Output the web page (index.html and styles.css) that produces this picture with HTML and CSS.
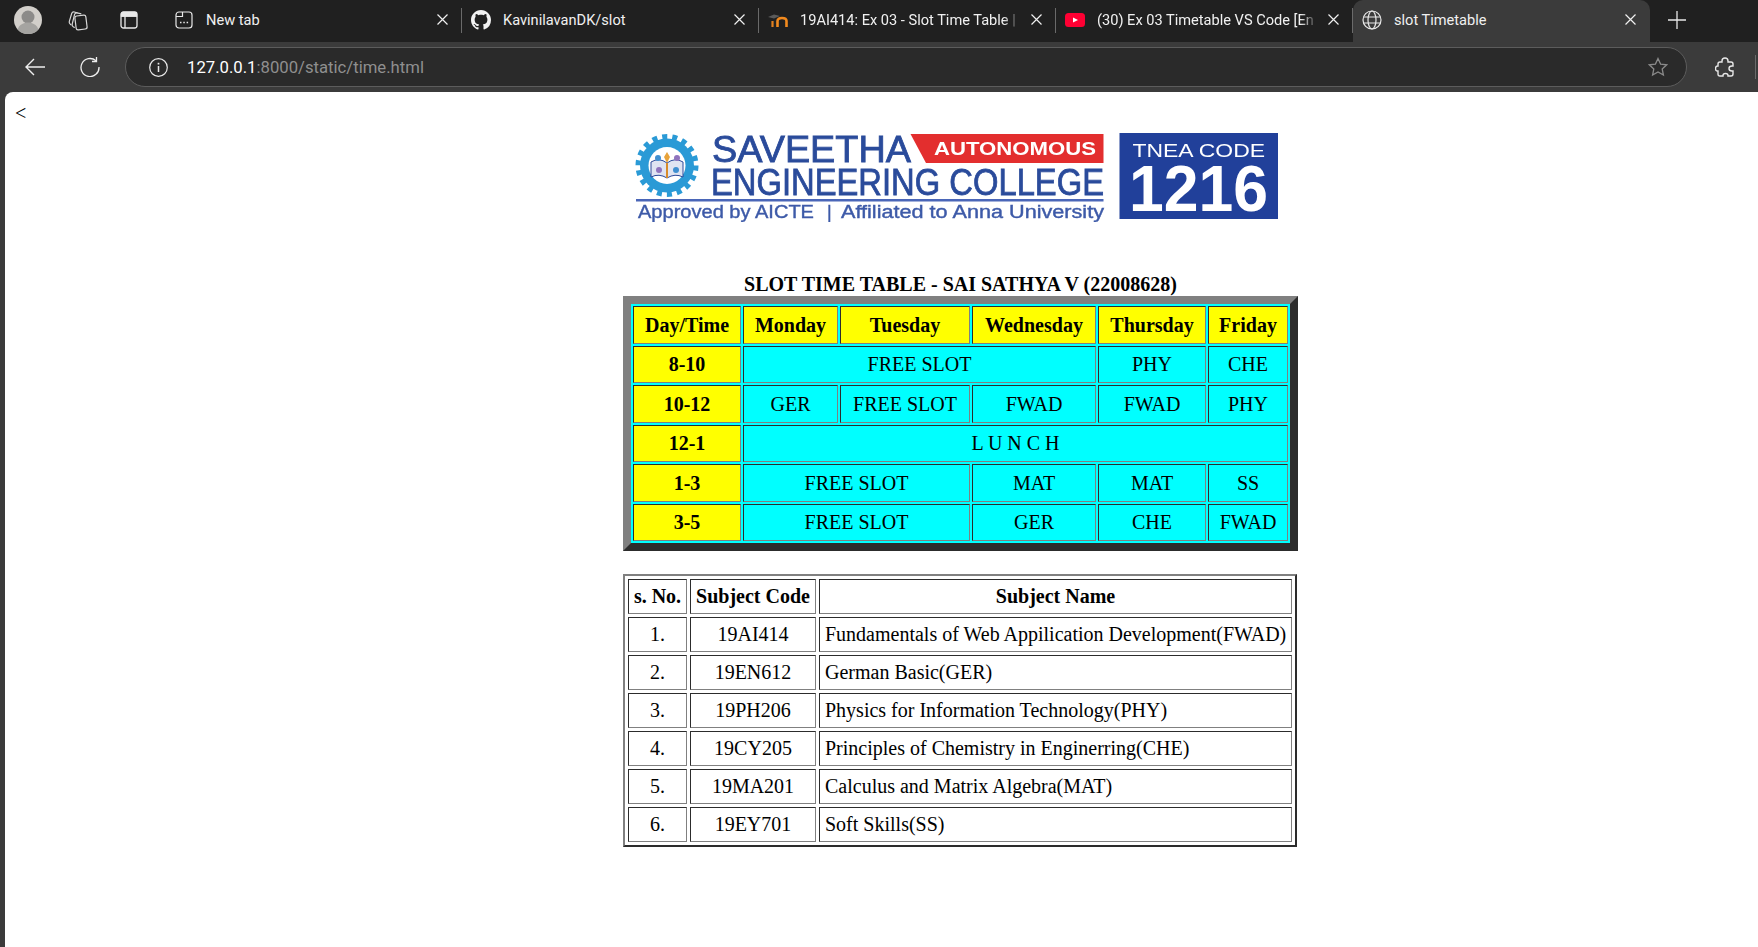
FILE: index.html
```html
<!DOCTYPE html>
<html lang="en">

<head>
  <meta charset="UTF-8" />
  <meta name="viewport" content="width=device-width, initial-scale=1.0" />
  <title>slot Timetable</title>
  <link rel="stylesheet" href="styles.css">
</head>

<body>
  <!-- browser tabs -->
  <div class="tabstrip">
    <div class="tools">
      <span class="avatar">
        <svg width="28" height="28" viewBox="0 0 28 28">
          <circle cx="14" cy="14" r="14" fill="#d2cfca" />
          <circle cx="14" cy="11" r="6.500" fill="#8c8b89" />
          <path d="M3.500 23.500c2-5 6-7 10.500-7s8.500 2 10.500 7a14 14 0 0 1-21 0z" fill="#a5a4a1" />
        </svg>
      </span>
      <svg class="tool-collections" width="22" height="22" viewBox="0 0 22 22" fill="none" stroke="#d8d8d8" stroke-width="1.200">
        <rect x="9.500" y="6.500" width="11" height="14" rx="2" transform="rotate(-7 15 13.500)" fill="#202020" />
        <path d="M8.800 18.500l-1.300-.5q-1.800-1-1.300-2.800l2.300-9.500q.6-2 2.500-1.800l4.300 1" />
        <path d="M5.500 16l-1-.6q-1.800-1.100-1.200-3l2.400-7.900q.7-2 2.600-1.500l3.200 1" />
      </svg>
      <svg class="tool-tabs" width="18" height="18" viewBox="0 0 18 18" fill="none" stroke="#e8e8e8" stroke-width="1.300">
        <rect x="1" y="1" width="16" height="16" rx="2.500" />
        <path d="M1 5h16M5 5v12" />
        <path d="M1.500 3q0-1.500 1.500-1.500h12q1.500 0 1.500 1.500v2h-15z" fill="#e8e8e8" />
      </svg>
    </div>

    <div class="tab">
      <svg class="tab-icon" width="20" height="20" viewBox="0 0 20 20" fill="none" stroke="#e8e8e8" stroke-width="1.200">
        <rect x="2" y="2" width="16" height="16" rx="3" />
        <path d="M2 6.500h6.500v-4.500" />
        <path d="M6 12.500h1.500M9.300 12.500h1.500M12.600 12.500h1.500" stroke-width="1.700" />
      </svg>
      <span class="tab-title">New tab</span>
      <svg class="tab-close" width="11" height="11" viewBox="0 0 11 11"><path d="M.5.500l10 10M10.500.500l-10 10" /></svg>
    </div>
    <div class="tab">
      <svg class="tab-icon" width="20" height="20" viewBox="0 0 16 16" fill="#f2f2f2">
        <path d="M8 0C3.580 0 0 3.580 0 8c0 3.540 2.290 6.530 5.470 7.590.4.070.55-.17.55-.38 0-.19-.01-.82-.01-1.490-2.010.37-2.530-.49-2.690-.94-.09-.23-.48-.94-.82-1.130-.28-.15-.68-.52-.01-.53.63-.01 1.080.58 1.230.82.720 1.210 1.870.87 2.330.66.070-.52.280-.87.510-1.070-1.780-.2-3.640-.89-3.640-3.950 0-.87.310-1.590.820-2.150-.08-.2-.36-1.020.08-2.120 0 0 .67-.21 2.200.82.640-.18 1.320-.27 2-.27s1.360.09 2 .27c1.530-1.040 2.200-.82 2.200-.82.440 1.100.160 1.920.080 2.120.510.560.820 1.270.820 2.150 0 3.070-1.870 3.750-3.650 3.950.290.250.540.730.540 1.480 0 1.070-.01 1.930-.01 2.200 0 .21.150.46.550.38A8.010 8.010 0 0 0 16 8c0-4.420-3.580-8-8-8z" />
      </svg>
      <span class="tab-title">KavinilavanDK/slot</span>
      <svg class="tab-close" width="11" height="11" viewBox="0 0 11 11"><path d="M.5.500l10 10M10.500.500l-10 10" /></svg>
    </div>
    <div class="tab">
      <svg class="tab-icon" width="20" height="20" viewBox="0 0 20 20" fill="none">
        <path d="M0 7l6-2.500 6 1.500-6 2.500z" fill="#5a5a5a" />
        <path d="M4.500 17v-6" stroke="#e08020" stroke-width="2.200" />
        <path d="M9.500 17v-6q0-3 4.500-3t4.500 3v6" stroke="#f28a1e" stroke-width="2.600" />
      </svg>
      <span class="tab-title fade">19AI414: Ex 03 - Slot Time Table |</span>
      <svg class="tab-close" width="11" height="11" viewBox="0 0 11 11"><path d="M.5.500l10 10M10.500.500l-10 10" /></svg>
    </div>
    <div class="tab">
      <svg class="tab-icon" width="20" height="20" viewBox="0 0 20 20">
        <rect x="0" y="3" width="20" height="14" rx="3.500" fill="#ff0033" />
        <path d="M8 7.500l5 2.500-5 2.500z" fill="#fff" />
      </svg>
      <span class="tab-title fade">(30) Ex 03 Timetable VS Code [En</span>
      <svg class="tab-close" width="11" height="11" viewBox="0 0 11 11"><path d="M.5.500l10 10M10.500.500l-10 10" /></svg>
    </div>
    <div class="tab active">
      <svg class="tab-icon" width="20" height="20" viewBox="0 0 20 20" fill="none" stroke="#e8e8e8" stroke-width="1.200">
        <circle cx="10" cy="10" r="9" />
        <ellipse cx="10" cy="10" rx="4" ry="9" />
        <path d="M1.800 7h16.400M1.800 13h16.400" />
      </svg>
      <span class="tab-title">slot Timetable</span>
      <svg class="tab-close" width="11" height="11" viewBox="0 0 11 11"><path d="M.5.500l10 10M10.500.500l-10 10" /></svg>
    </div>
    <svg class="new-tab" width="18" height="18" viewBox="0 0 18 18" stroke="#e8e8e8" stroke-width="1.300">
      <path d="M9 0v18M0 9h18" />
    </svg>
  </div>

  <!-- address bar -->
  <div class="toolbar">
    <svg class="nav-back" width="20" height="18" viewBox="0 0 20 18" fill="none" stroke="#eee" stroke-width="1.400">
      <path d="M20 9H1M9 1L1 9l8 8" />
    </svg>
    <svg class="nav-reload" width="20" height="20" viewBox="0 0 20 20" fill="none" stroke="#eee" stroke-width="1.300">
      <path d="M16 3.800A9 9 0 1 0 19 10" />
      <path d="M16.500 0v4.500H12" />
    </svg>
    <div class="addressbar">
      <svg class="info" width="19" height="19" viewBox="0 0 19 19" fill="none" stroke="#e8e8e8" stroke-width="1.200">
        <circle cx="9.500" cy="9.500" r="8.800" />
        <path d="M9.500 8v6" stroke-width="1.500" />
        <path d="M9.500 4.800v1.700" stroke-width="1.700" />
      </svg>
      <span class="url"><span class="host">127.0.0.1</span>:8000/static/time.html</span>
      <svg class="star" width="20" height="20" viewBox="0 0 20 20" fill="none" stroke="#8a8a8a" stroke-width="1.300">
        <path d="M10 1.500l2.600 5.600 6.100.7-4.500 4.200 1.200 6-5.400-3-5.400 3 1.200-6-4.500-4.200 6.100-.7z" />
      </svg>
    </div>
    <svg class="puzzle" width="20" height="21" viewBox="0 0 20 21" fill="none" stroke="#e8e8e8" stroke-width="1.400">
      <path d="M7 4q0-3 3-3t3 3v1h3q2 0 2 2v2h-1q-3 0-3 2.500t3 2.500h1v3q0 2-2 2h-3v-.5q0-2-2.500-2t-2.500 2v.5H5q-2 0-2-2v-3h-.5q-2 0-2-2.500t2-2.500H3V7q0-2 2-2h2z" />
    </svg>
    <span class="toolbar-sep"></span>
  </div>

  <!-- page -->
  <div class="viewport">
    <div class="page">
      <div class="stray">&lt;</div>
      <div class="sheet">
        <svg class="logo" width="650" height="92" viewBox="632 130 650 92">
          <!-- gear badge -->
          <circle cx="667" cy="165.500" r="28.500" fill="none" stroke="#2a9ad6" stroke-width="6" stroke-dasharray="5 4.950" />
          <circle cx="667" cy="165.500" r="27" fill="#2a9ad6" />
          <circle cx="667" cy="165.500" r="18.500" fill="#fff" />
          <path d="M651 162q8-5 16 1q8-6 16-1v15q-8-4-16 1q-8-5-16-1z" fill="#dfe4f2" stroke="#2c4a9a" stroke-width="1" />
          <path d="M667 163l-3-6 3-5 3 5z" fill="#e8a33a" />
          <path d="M666 163h2v15h-2z" fill="#d98c2a" />
          <circle cx="658" cy="158" r="3" fill="#3f8fd0" />
          <circle cx="677" cy="158" r="3" fill="#8f74bd" />
          <circle cx="659" cy="170" r="3" fill="#8f74bd" />
          <circle cx="676" cy="170" r="3" fill="#3f8fd0" />
          <!-- college name -->
          <text class="logo-name" x="712" y="162" textLength="199" lengthAdjust="spacingAndGlyphs">SAVEETHA</text>
          <path class="logo-flag" d="M910.500 134H1103.500V163H926z" />
          <text class="logo-auto" x="934" y="155" textLength="162" lengthAdjust="spacingAndGlyphs">AUTONOMOUS</text>
          <text class="logo-name" x="711" y="195" textLength="393" lengthAdjust="spacingAndGlyphs">ENGINEERING COLLEGE</text>
          <rect class="logo-rule" x="636" y="199" width="467.500" height="2.500" />
          <text class="logo-sub" x="638" y="218" textLength="176" lengthAdjust="spacingAndGlyphs">Approved by AICTE</text>
          <text class="logo-sub" x="827" y="218">|</text>
          <text class="logo-sub" x="841" y="218" textLength="263" lengthAdjust="spacingAndGlyphs">Affiliated to Anna University</text>
          <!-- TNEA box -->
          <rect class="logo-box" x="1119.500" y="133" width="158.500" height="86" />
          <text class="logo-tnea" x="1132.500" y="157" textLength="132.500" lengthAdjust="spacingAndGlyphs">TNEA CODE</text>
          <text class="logo-code" x="1129" y="211" textLength="139" lengthAdjust="spacingAndGlyphs">1216</text>
        </svg>

        <table class="slots">
          <caption>SLOT TIME TABLE - SAI SATHYA V (22008628)</caption>
          <tr>
            <th class="w-day">Day/Time</th>
            <th class="w-mon">Monday</th>
            <th class="w-tue">Tuesday</th>
            <th class="w-wed">Wednesday</th>
            <th class="w-thu">Thursday</th>
            <th class="w-fri">Friday</th>
          </tr>
          <tr>
            <th>8-10</th>
            <td colspan="3">FREE SLOT</td>
            <td>PHY</td>
            <td>CHE</td>
          </tr>
          <tr>
            <th>10-12</th>
            <td>GER</td>
            <td>FREE SLOT</td>
            <td>FWAD</td>
            <td>FWAD</td>
            <td>PHY</td>
          </tr>
          <tr>
            <th>12-1</th>
            <td colspan="5">L U N C H</td>
          </tr>
          <tr>
            <th>1-3</th>
            <td colspan="2">FREE SLOT</td>
            <td>MAT</td>
            <td>MAT</td>
            <td>SS</td>
          </tr>
          <tr>
            <th>3-5</th>
            <td colspan="2">FREE SLOT</td>
            <td>GER</td>
            <td>CHE</td>
            <td>FWAD</td>
          </tr>
        </table>

        <table class="subjects">
          <tr>
            <th class="w-no">s. No.</th>
            <th class="w-code">Subject Code</th>
            <th class="w-name">Subject Name</th>
          </tr>
          <tr>
            <td>1.</td>
            <td>19AI414</td>
            <td class="name">Fundamentals of Web Appilication Development(FWAD)</td>
          </tr>
          <tr>
            <td>2.</td>
            <td>19EN612</td>
            <td class="name">German Basic(GER)</td>
          </tr>
          <tr>
            <td>3.</td>
            <td>19PH206</td>
            <td class="name">Physics for Information Technology(PHY)</td>
          </tr>
          <tr>
            <td>4.</td>
            <td>19CY205</td>
            <td class="name">Principles of Chemistry in Enginerring(CHE)</td>
          </tr>
          <tr>
            <td>5.</td>
            <td>19MA201</td>
            <td class="name">Calculus and Matrix Algebra(MAT)</td>
          </tr>
          <tr>
            <td>6.</td>
            <td>19EY701</td>
            <td class="name">Soft Skills(SS)</td>
          </tr>
        </table>
      </div>
    </div>
  </div>
</body>

</html>
```

FILE: styles.css
```css
* {
  margin: 0;
  padding: 0;
  box-sizing: border-box;
}

html,
body {
  height: 100%;
  overflow: hidden;
}

body {
  display: flex;
  flex-direction: column;
  background: #3b3b3b;
  font-family: Roboto, "Open Sans", sans-serif;
}

/* tab strip */
.tabstrip {
  display: flex;
  align-items: center;
  height: 42px;
  padding-bottom: 3px;
  background: #202020;
  color: #f0f0f0;
  font-size: 14.600px;
}

.tools {
  display: flex;
  align-items: center;
  width: 165px;
  height: 100%;
  padding-left: 14px;
}

.avatar {
  display: flex;
  width: 28px;
  height: 28px;
}

.tool-collections {
  margin-left: 24px;
}

.tool-tabs {
  margin-left: 32px;
}

.tab {
  display: flex;
  align-items: center;
  width: 297px;
  height: 100%;
  padding: 0 14px 0 9px;
  position: relative;
}

.tab::after {
  content: "";
  position: absolute;
  right: 0;
  top: 8px;
  bottom: 6px;
  width: 1px;
  background: #6a6a6a;
}

.tab:first-of-type::before {
  content: "";
  position: absolute;
  left: -1px;
  top: 8px;
  bottom: 6px;
  width: 1px;
  background: #6a6a6a;
}

.tab.active {
  height: 42px;
  margin-bottom: -3px;
  padding-bottom: 3px;
  background: #3b3b3b;
  border-radius: 10px 10px 0 0;
}

.tab.active::after {
  display: none;
}

.tab-icon {
  flex: none;
}

.tab-title {
  flex: 1;
  margin-left: 12px;
  white-space: nowrap;
  overflow: hidden;
}

.tab-title.fade {
  -webkit-mask-image: linear-gradient(to right, #000 92%, transparent);
  mask-image: linear-gradient(to right, #000 92%, transparent);
}

.tab-close {
  flex: none;
  margin-left: 10px;
  fill: none;
  stroke: #f0f0f0;
  stroke-width: 1.200;
}

.new-tab {
  margin-left: 18px;
}

/* address bar */
.toolbar {
  display: flex;
  align-items: center;
  height: 50px;
  background: #3b3b3b;
  padding-left: 25px;
}

.nav-reload {
  margin-left: 35px;
}

.addressbar {
  display: flex;
  align-items: center;
  width: 1562px;
  height: 40px;
  margin-left: 25px;
  padding: 0 18px 0 23px;
  background: #2a2a2a;
  border: 1px solid #5c5c5c;
  border-radius: 20px;
  font-size: 16.700px;
}

.url {
  flex: 1;
  margin-left: 19px;
  color: #8f8f8f;
}

.host {
  color: #fff;
}

.puzzle {
  margin-left: 28px;
}

.toolbar-sep {
  width: 1px;
  height: 24px;
  margin-left: 20px;
  background: #6a6a6a;
}

/* page */
.viewport {
  flex: 1;
  padding-left: 5px;
  overflow: hidden;
}

.page {
  height: 100%;
  padding-top: 10px;
  background: #fff;
  border-radius: 8px 0 0 0;
  color: #000;
  font-family: "Liberation Serif", serif;
  font-size: 20px;
}

.stray {
  padding-left: 10px;
  line-height: 23px;
}

.sheet {
  width: 675px;
  margin-left: 618px;
}

.logo {
  display: block;
  margin: 5px 0 0 9px;
  filter: blur(0.4px);
  font-family: "Liberation Sans", sans-serif;
}

.logo-name {
  font-size: 37px;
  fill: #2a4b9b;
  stroke: #2a4b9b;
  stroke-width: 0.8px;
}

.logo-flag {
  fill: #e32e2e;
}

.logo-auto {
  font-size: 19px;
  font-weight: bold;
  fill: #fff;
}

.logo-rule {
  fill: #4a66b8;
}

.logo-sub {
  font-size: 18px;
  fill: #3d5aa8;
  stroke: #3d5aa8;
  stroke-width: 0.4px;
}

.logo-box {
  fill: #21409a;
}

.logo-tnea {
  font-size: 18px;
  fill: #fff;
}

.logo-code {
  font-size: 64px;
  font-weight: bold;
  fill: #fff;
}

/* time table */
table {
  table-layout: fixed;
  border-collapse: separate;
  font-size: 20px;
}

th,
td {
  padding: 0;
  border: 1px inset gray;
  text-align: center;
  font-weight: normal;
}

th {
  font-weight: bold;
}

caption {
  height: 23px;
  line-height: 23px;
  font-weight: bold;
}

.slots {
  width: 675px;
  margin-top: 51px;
  border: 8px outset gray;
  border-spacing: 2px;
  background: #00ffff;
}

.slots th {
  background: #ffff00;
}

.slots tr:nth-child(odd) {
  height: 38px;
}

.slots tr:nth-child(even) {
  height: 37px;
}

.w-day {
  width: 108px;
}

.w-mon {
  width: 95px;
}

.w-tue {
  width: 130px;
}

.w-wed {
  width: 124px;
}

.w-thu {
  width: 108px;
}

.w-fri {
  width: 80px;
}

/* subject list */
.subjects {
  width: 674px;
  margin-top: 23px;
  border: 2px outset gray;
  border-spacing: 3px;
}

.subjects tr {
  height: 35px;
}

.w-no {
  width: 59px;
}

.w-code {
  width: 126px;
}

.w-name {
  width: 473px;
}

.subjects .name {
  padding-left: 5px;
  text-align: left;
}
```
